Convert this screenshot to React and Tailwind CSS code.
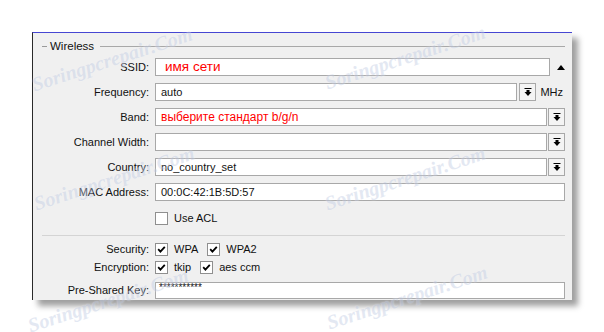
import React from "react";

const FONT = { fontFamily: '"Liberation Sans", Arial, sans-serif' };

const WATERMARKS = [
  "left-[112px] top-[59px]",
  "left-[405px] top-[57px]",
  "left-[114px] top-[178px]",
  "left-[405px] top-[178px]",
  "left-[108px] top-[300px]",
  "left-[407px] top-[297px]",
];

function DropIcon() {
  return (
    <svg width="8" height="9" viewBox="0 0 8 9">
      <rect x="0.5" y="0" width="7" height="1" fill="#000" />
      <rect x="2.5" y="2" width="3" height="2" fill="#000" />
      <path d="M0.5 4 H7.5 L4 8 Z" fill="#000" />
    </svg>
  );
}

function DropButton() {
  return (
    <div className="w-[17px] h-[18px] shrink-0 border border-[#a8a8a8] bg-[#f4f4f4] flex items-center justify-center">
      <DropIcon />
    </div>
  );
}

function Check({ checked }) {
  return (
    <div className="w-[13px] h-[13px] shrink-0 border border-[#8f8f8f] bg-white flex items-center justify-center">
      {checked && (
        <svg width="9" height="9" viewBox="0 0 9 9">
          <path d="M1.2 4.2 L3.4 6.6 L7.8 1.8" stroke="#000" strokeWidth="1.8" fill="none" />
        </svg>
      )}
    </div>
  );
}

function Row({ label, children }) {
  return (
    <div className="flex items-center h-[18px]">
      <div className="w-[116px] text-right text-[11px] text-[#111] whitespace-nowrap">{label}</div>
      <div className="ml-[6px] flex-1 flex items-center h-full">{children}</div>
    </div>
  );
}

function Field({ children, className = "" }) {
  return (
    <div className={"h-full flex-1 border border-[#a8a8a8] bg-white flex items-center pl-[5px] text-[11px] text-[#111] " + className}>
      {children}
    </div>
  );
}

function CheckItem({ checked, label }) {
  return (
    <div className="flex items-center">
      <Check checked={checked} />
      <span className="ml-[6px] text-[11px] text-[#111]">{label}</span>
    </div>
  );
}

export default function App() {
  return (
    <div className="relative w-[604px] h-[332px] overflow-hidden bg-white" style={FONT}>
      <div className="pt-[32px] pl-[32px]">
        <div className="w-[540px] h-[268px] bg-[#f0f0f0] border-l border-t border-l-[#2a2a2a] border-t-[#4646d2] shadow-[6px_6px_6px_rgba(0,0,0,0.38)] pr-[7px]">
          <div className="pt-[7px] flex items-center h-[20px] pl-[9px]">
            <div className="w-[5px] h-px bg-[#9a9a9a]" />
            <span className="ml-[3px] text-[11.5px] text-[#111]">Wireless</span>
            <div className="ml-[6px] flex-1 h-px bg-[#a8a8a8]" />
          </div>

          <div className="mt-[5px] flex flex-col gap-[7px]">
            <Row label="SSID:">
              <Field className="mr-[5px]">
                <span className="text-[#ff0000] text-[13.5px] ml-[4px]">имя сети</span>
              </Field>
              <svg width="8" height="5" viewBox="0 0 8 5" className="ml-[2px]">
                <path d="M0 5 H8 L4 0 Z" fill="#000" />
              </svg>
            </Row>
            <Row label="Frequency:">
              <Field className="mr-[2px]">auto</Field>
              <DropButton />
              <span className="ml-[4px] mr-[2px] text-[11px] text-[#111]">MHz</span>
            </Row>
            <Row label="Band:">
              <Field className="mr-[1px]">
                <span className="text-[#ff0000] text-[12px]">выберите стандарт b/g/n</span>
              </Field>
              <DropButton />
            </Row>
            <Row label="Channel Width:">
              <Field className="mr-[1px]" />
              <DropButton />
            </Row>
            <Row label="Country:">
              <Field className="mr-[1px]">no_country_set</Field>
              <DropButton />
            </Row>
            <Row label="MAC Address:">
              <Field className="bg-[#f0f0f0]">00:0C:42:1B:5D:57</Field>
            </Row>
          </div>

          <div className="mt-[9px] ml-[122px]">
            <CheckItem checked={false} label="Use ACL" />
          </div>

          <div className="mt-[8px] ml-[9px] h-px bg-[#d4d4d4]" />

          <div className="mt-[7px] flex items-center h-[13px]">
            <div className="w-[116px] text-right text-[11px] text-[#111]">Security:</div>
            <div className="ml-[6px] flex items-center gap-[9px]">
              <CheckItem checked label="WPA" />
              <CheckItem checked label="WPA2" />
            </div>
          </div>
          <div className="mt-[5px] flex items-center h-[13px]">
            <div className="w-[116px] text-right text-[11px] text-[#111]">Encryption:</div>
            <div className="ml-[6px] flex items-center gap-[9px]">
              <CheckItem checked label="tkip" />
              <CheckItem checked label="aes ccm" />
            </div>
          </div>
          <div className="mt-[8px] flex items-center h-[17px]">
            <div className="w-[116px] text-right text-[11px] text-[#111]">Pre-Shared Key:</div>
            <div className="ml-[6px] flex-1 h-full border border-[#a8a8a8] bg-white flex items-start pl-[3px] text-[10px] leading-[10px] text-[#111]">
              ***********
            </div>
          </div>
        </div>
      </div>

      {WATERMARKS.map((pos, i) => (
        <div
          key={i}
          className={"absolute pointer-events-none -translate-x-1/2 -translate-y-1/2 rotate-[-18deg] whitespace-nowrap text-[20px] italic font-bold text-[#c3cde4] opacity-45 [text-shadow:0_0_2px_#fff] " + pos}
          style={{ fontFamily: '"Liberation Serif", "Times New Roman", serif' }}
        >
          Soringpcrepair.Com
        </div>
      ))}
    </div>
  );
}
